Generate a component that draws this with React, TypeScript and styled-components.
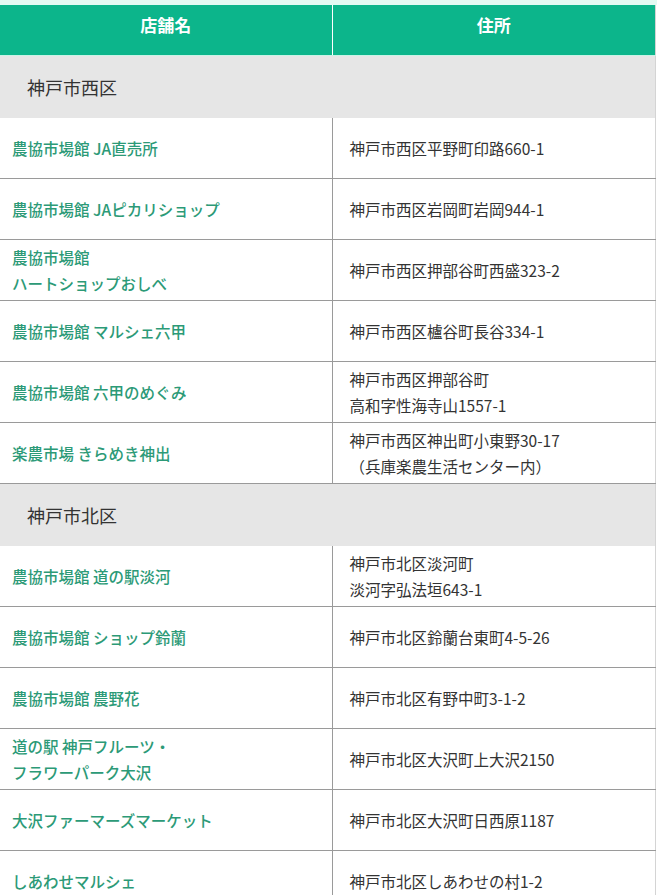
import React from 'react';
import styled, { createGlobalStyle } from 'styled-components';

type Shop = { name: string[]; address: string[] };
type Group = { area: string; shops: Shop[] };

const groups: Group[] = [
  {
    area: '神戸市西区',
    shops: [
      { name: ['農協市場館 JA直売所'], address: ['神戸市西区平野町印路660-1'] },
      { name: ['農協市場館 JAピカリショップ'], address: ['神戸市西区岩岡町岩岡944-1'] },
      { name: ['農協市場館', 'ハートショップおしべ'], address: ['神戸市西区押部谷町西盛323-2'] },
      { name: ['農協市場館 マルシェ六甲'], address: ['神戸市西区櫨谷町長谷334-1'] },
      { name: ['農協市場館 六甲のめぐみ'], address: ['神戸市西区押部谷町', '高和字性海寺山1557-1'] },
      { name: ['楽農市場 きらめき神出'], address: ['神戸市西区神出町小東野30-17', '（兵庫楽農生活センター内）'] },
    ],
  },
  {
    area: '神戸市北区',
    shops: [
      { name: ['農協市場館 道の駅淡河'], address: ['神戸市北区淡河町', '淡河字弘法垣643-1'] },
      { name: ['農協市場館 ショップ鈴蘭'], address: ['神戸市北区鈴蘭台東町4-5-26'] },
      { name: ['農協市場館 農野花'], address: ['神戸市北区有野中町3-1-2'] },
      { name: ['道の駅 神戸フルーツ・', 'フラワーパーク大沢'], address: ['神戸市北区大沢町上大沢2150'] },
      { name: ['大沢ファーマーズマーケット'], address: ['神戸市北区大沢町日西原1187'] },
      { name: ['しあわせマルシェ'], address: ['神戸市北区しあわせの村1-2'] },
    ],
  },
];

export default function App() {
  return (
    <>
      <GlobalStyle />
      <Page>
        <ShopTable>
          <colgroup>
            <col style={{ width: 332 }} />
            <col />
          </colgroup>
          <thead>
            <tr>
              <HeadCell>店舗名</HeadCell>
              <HeadCell>住所</HeadCell>
            </tr>
          </thead>
          <tbody>
            {groups.map((group) => (
              <React.Fragment key={group.area}>
                <tr>
                  <AreaCell colSpan={2}>{group.area}</AreaCell>
                </tr>
                {group.shops.map((shop) => (
                  <tr key={shop.name.join('')}>
                    <NameCell>
                      {shop.name.map((line) => (
                        <Line key={line}>{line}</Line>
                      ))}
                    </NameCell>
                    <AddressCell>
                      {shop.address.map((line) => (
                        <Line key={line}>{line}</Line>
                      ))}
                    </AddressCell>
                  </tr>
                ))}
              </React.Fragment>
            ))}
          </tbody>
        </ShopTable>
      </Page>
    </>
  );
}

const GlobalStyle = createGlobalStyle`
  body {
    margin: 0;
    background: #fff;
    font-family: "Noto Sans CJK JP", "Noto Sans", sans-serif;
  }
`;

const Page = styled.div`
  border-top: 5px solid #e3faf3;
  width: 657px;
`;

const ShopTable = styled.table`
  width: 656px;
  border-collapse: collapse;
  table-layout: fixed;
  border-right: 1px solid #d4d4d4;
`;

const HeadCell = styled.th`
  height: 43px;
  padding: 7px 0 0;
  vertical-align: top;
  line-height: 26px;
  background: #0cb58b;
  color: #fff;
  font-size: 17px;
  font-weight: 700;
  text-align: center;
  border-bottom: 1px solid #c9f3e6;
  & + & {
    border-left: 1px solid #fff;
  }
`;

const AreaCell = styled.td`
  height: 62px;
  padding: 0 0 0 27px;
  background: #e6e6e6;
  color: #333;
  font-size: 18px;
  font-weight: 400;
`;

const NameCell = styled.td`
  height: 60px;
  padding: 0 0 0 12px;
  color: #2c9a77;
  font-size: 15.5px;
  font-weight: 500;
  border-bottom: 1px solid #9a9a9a;
  border-right: 1px solid #9a9a9a;
`;

const AddressCell = styled.td`
  height: 60px;
  padding: 0 0 0 17px;
  color: #333;
  font-size: 15.5px;
  border-bottom: 1px solid #9a9a9a;
`;

const Line = styled.div`
  line-height: 26px;
`;
